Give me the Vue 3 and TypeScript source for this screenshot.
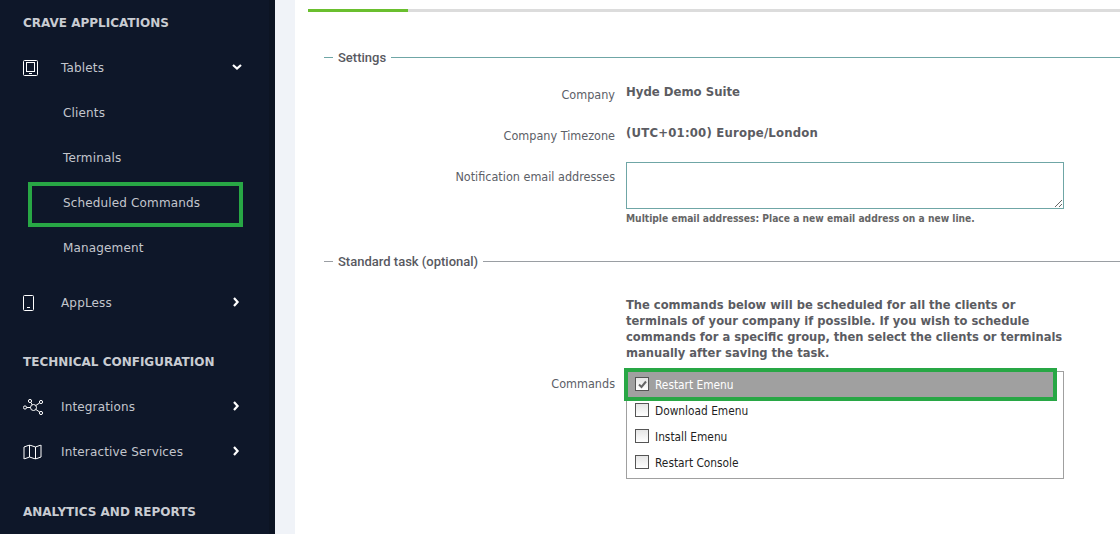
<script setup lang="ts">
const commands = ['Restart Emenu', 'Download Emenu', 'Install Emenu', 'Restart Console']
</script>

<template>
  <div class="page">
    <aside class="sidebar">
      <div class="inner">
        <h3 class="head first">CRAVE APPLICATIONS</h3>
        <div class="item">
          <svg class="ic" width="15" height="16" viewBox="0 0 15 16" fill="none" stroke="#fff"><rect x="0.5" y="0.5" width="14" height="15" rx="1"/><rect x="3.500" y="2.500" width="8" height="9"/><path d="M6 13.500h3"/></svg>
          <span>Tablets</span>
          <svg class="chev" width="10" height="8" viewBox="0 0 10 8" fill="none" stroke="#fff" stroke-width="2.2"><path d="M1 2l4 3.600L9 2"/></svg>
        </div>
        <div class="sub">Clients</div>
        <div class="sub">Terminals</div>
        <div class="sub marked">Scheduled Commands</div>
        <div class="sub">Management</div>
        <div class="item gap">
          <svg class="ic" width="15" height="16" viewBox="0 0 15 16" fill="none" stroke="#fff"><rect x="0.5" y="0.5" width="10" height="15" rx="1"/><path d="M4 12.500h3"/></svg>
          <span>AppLess</span>
          <svg class="chev" width="8" height="10" viewBox="0 0 8 10" fill="none" stroke="#fff" stroke-width="2.2"><path d="M2 1l3.600 4L2 9"/></svg>
        </div>
        <h3 class="head second">TECHNICAL CONFIGURATION</h3>
        <div class="item">
          <svg class="ic" width="21" height="17" viewBox="0 0 21 17" fill="none" stroke="#fff"><circle cx="10.500" cy="9" r="3"/><circle cx="7" cy="2.500" r="1.600"/><circle cx="18" cy="3.500" r="1.600"/><circle cx="2" cy="9" r="1.600"/><circle cx="18" cy="14.500" r="1.600"/><path d="M8 4l1.300 2.500M16.600 4.500l-4 2.600M3.600 9h3.900M16.700 13.500l-4-2.600"/></svg>
          <span>Integrations</span>
          <svg class="chev" width="8" height="10" viewBox="0 0 8 10" fill="none" stroke="#fff" stroke-width="2.2"><path d="M2 1l3.600 4L2 9"/></svg>
        </div>
        <div class="item">
          <svg class="ic" width="19" height="15" viewBox="0 0 19 15" fill="none" stroke="#fff"><path d="M1 2.500l5.500-2 6 2 5.500-2v12l-5.500 2-6-2-5.500 2z"/><path d="M6.500 .5v12M12.500 2.500v12"/></svg>
          <span>Interactive Services</span>
          <svg class="chev" width="8" height="10" viewBox="0 0 8 10" fill="none" stroke="#fff" stroke-width="2.2"><path d="M2 1l3.600 4L2 9"/></svg>
        </div>
        <h3 class="head third">ANALYTICS AND REPORTS</h3>
      </div>
    </aside>
    <div class="gutter"></div>
    <main class="main">
      <div class="progress"><div class="fill"></div></div>

      <div class="legend teal"><i class="dash"></i><span>Settings</span><i class="rule"></i></div>
      <div class="row r1"><label>Company</label><b>Hyde Demo Suite</b></div>
      <div class="row r2"><label>Company Timezone</label><b class="tz">(UTC+01:00) Europe/London</b></div>
      <div class="row r3">
        <label>Notification email addresses</label>
        <div class="field">
          <textarea></textarea>
          <small>Multiple email addresses: Place a new email address on a new line.</small>
        </div>
      </div>

      <div class="legend grey"><i class="dash"></i><span>Standard task (optional)</span><i class="rule"></i></div>
      <div class="row r4">
        <label></label>
        <p class="note">The commands below will be scheduled for all the clients or terminals of your company if possible. If you wish to schedule commands for a specific group, then select the clients or terminals manually after saving the task.</p>
      </div>
      <div class="row r5">
        <label>Commands</label>
        <div class="list">
          <div v-for="(c, i) in commands" :key="c" class="opt" :class="{ on: i === 0 }">
            <span class="box">
              <svg v-if="i === 0" width="11" height="11" viewBox="0 0 11 11" fill="none" stroke="#666" stroke-width="2"><path d="M2 5.500l2.500 2.500L9 2.500"/></svg>
            </span>
            <span>{{ c }}</span>
          </div>
        </div>
      </div>
    </main>
  </div>
</template>

<style>
html, body { margin: 0; background: #fff; overflow: hidden; }
</style>

<style scoped>
.page { display: flex; width: 1120px; height: 534px; overflow: hidden; font-family: "DejaVu Sans", Verdana, sans-serif; font-size: 12px; }
.sidebar { width: 275px; flex: none; background: #0e1729; box-shadow: inset -6px 0 0 #0c1423; }
.inner { width: 269px; letter-spacing: 0.15px; }
.head { margin: 0; padding-left: 23px; height: 16px; line-height: 16px; font-size: 12px; font-weight: 700; color: #c9ccd2; letter-spacing: 0; }
.first { margin-top: 15px; margin-bottom: 15px; }
.second { margin-top: 28px; margin-bottom: 15px; }
.third { margin-top: 29px; }
.item { height: 45px; box-sizing: border-box; padding: 0 0 2px 61px; display: flex; align-items: center; position: relative; color: #c3c6cd; }
.item.gap { margin-top: 10px; }
.ic { position: absolute; left: 23px; top: calc(50% - 1px); transform: translateY(-50%); }
.chev { position: absolute; left: 232px; top: calc(50% - 1.5px); transform: translateY(-50%); }
.sub { height: 45px; line-height: 45px; padding-left: 63px; color: #c3c6cd; position: relative; }
.marked::after { content: ""; position: absolute; left: 28px; top: 1px; width: 215px; height: 45px; box-sizing: border-box; border: 4px solid #28a745; }
.gutter { width: 20px; flex: none; background: #f0f3f8; }
.main { flex: 1; min-width: 0; padding: 9px 0 0 13px; color: #58595f; font-stretch: condensed; }
.progress { height: 3px; background: #dcdcdc; }
.fill { width: 100px; height: 3px; background: #6abf2e; }
.legend { display: flex; align-items: center; gap: 5px; padding-left: 16px; font-family: Roboto, sans-serif; font-size: 13px; font-weight: 500; height: 16px; font-stretch: normal; }
.legend .dash { width: 9px; height: 1px; background: currentColor; }
.legend span { color: #58595f; }
.legend .rule { flex: 1; height: 1px; background: currentColor; }
.teal { color: #6fa6a6; margin-top: 37px; }
.grey { color: #9a9ea3; margin-top: 28px; }
.row { display: flex; align-items: flex-start; }
.row label { width: 307px; flex: none; text-align: right; color: #5c6067; font-size: 12.5px; line-height: 16px; padding-right: 11px; }
.row > b { font-size: 13px; line-height: 16px; color: #5b5c62; position: relative; top: -3px; }
.row > b.tz { letter-spacing: 0.2px; }
.r1 { margin-top: 22px; height: 41px; }
.r2 { height: 34px; }
.r3 label { margin-top: 7px; }
.field { width: 438px; }
textarea { display: block; width: 438px; height: 47px; box-sizing: border-box; border: 1px solid #6fa6a6; margin: 0; background: #fff; }
small { display: block; margin-top: 4px; font-size: 10.2px; font-weight: 700; line-height: 12px; color: #666; white-space: nowrap; }
.r4 { margin-top: 28px; }
.note { margin: 0; width: 438px; font-size: 12.8px; font-weight: 700; line-height: 16px; color: #5b5c62; }
.r5 { margin-top: 10px; }
.r5 label { margin-top: 5px; }
.list { width: 438px; height: 108px; box-sizing: border-box; border: 1px solid #a0a0a0; position: relative; }
.opt { height: 26px; display: flex; align-items: center; gap: 6px; padding-left: 8px; color: #1f1f1f; position: relative; font-size: 11.8px; }
.opt.on { color: #fff; background: #a0a0a0; width: 426px; box-sizing: border-box; }
.opt.on::after { content: ""; position: absolute; left: -3px; top: -4px; width: 433px; height: 33px; box-sizing: border-box; border: 4px solid #28a745; }
.box { width: 14px; height: 14px; margin-bottom: 2px; box-sizing: border-box; border: 1px solid #555; background: linear-gradient(#e6e6e6, #fff); display: flex; align-items: center; justify-content: center; }
</style>
